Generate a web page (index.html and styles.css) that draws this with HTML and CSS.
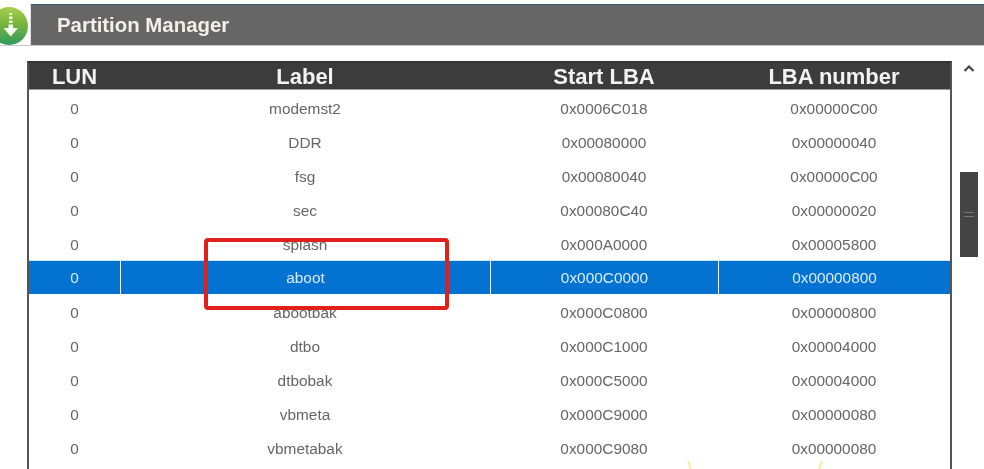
FILE: index.html
```html
<!DOCTYPE html>
<html lang="en">
<head>
    <meta charset="UTF-8">
    <meta name="viewport" content="width=device-width, initial-scale=1.0">
    <title>Partition Manager</title>
    <link rel="stylesheet" href="styles.css">
</head>
<body>
    <div class="title-bar">
        <div class="title-icon">
            <svg width="30" height="41" viewBox="0 -1 30 41">
                <defs>
                    <linearGradient id="ball" x1="0" y1="0" x2="0" y2="1">
                        <stop offset="0" stop-color="#a8d04c"/>
                        <stop offset="0.5" stop-color="#72b23c"/>
                        <stop offset="1" stop-color="#2e9a60"/>
                    </linearGradient>
                </defs>
                <circle cx="9" cy="21" r="19" fill="url(#ball)"/>
                <path d="M9.500 8h2.500v2h-2.500zM9.200 11.500h3.200v2.500H9.200zM9 15.500h3.600V18H9zM8.500 19.500h4.500V23h5l-7.300 8.500L3.500 23h5z" fill="#f6f9ee"/>
            </svg>
        </div>
        <h1>Partition Manager</h1>
    </div>

    <div class="content">
        <div class="table-frame">
            <table class="partitions">
                <thead>
                    <tr>
                        <th class="col-lun">LUN</th>
                        <th class="col-label">Label</th>
                        <th class="col-start">Start LBA</th>
                        <th>LBA number</th>
                    </tr>
                </thead>
                <tbody>
                    <tr><td>0</td><td>modemst2</td><td>0x0006C018</td><td>0x00000C00</td></tr>
                    <tr><td>0</td><td>DDR</td><td>0x00080000</td><td>0x00000040</td></tr>
                    <tr><td>0</td><td>fsg</td><td>0x00080040</td><td>0x00000C00</td></tr>
                    <tr><td>0</td><td>sec</td><td>0x00080C40</td><td>0x00000020</td></tr>
                    <tr><td>0</td><td>splash</td><td>0x000A0000</td><td>0x00005800</td></tr>
                    <tr class="selected"><td>0</td><td>aboot</td><td>0x000C0000</td><td>0x00000800</td></tr>
                    <tr><td>0</td><td>abootbak</td><td>0x000C0800</td><td>0x00000800</td></tr>
                    <tr><td>0</td><td>dtbo</td><td>0x000C1000</td><td>0x00004000</td></tr>
                    <tr><td>0</td><td>dtbobak</td><td>0x000C5000</td><td>0x00004000</td></tr>
                    <tr><td>0</td><td>vbmeta</td><td>0x000C9000</td><td>0x00000080</td></tr>
                    <tr><td>0</td><td>vbmetabak</td><td>0x000C9080</td><td>0x00000080</td></tr>
                </tbody>
            </table>
        </div>

        <div class="scrollbar">
            <svg class="scroll-up" width="12" height="8" viewBox="0 0 12 8">
                <path d="M1.500 7 6 2.500 10.500 7" fill="none" stroke="#444" stroke-width="2.200"/>
            </svg>
            <div class="scroll-thumb"><span></span><span></span></div>
        </div>
    </div>

    <!-- annotation drawn over the screenshot -->
    <div class="red-box"></div>
    <svg class="sparks" width="150" height="8" viewBox="0 0 150 8">
        <path d="M2 0 5 8M133 8 136 0" stroke="#fbe89a" stroke-width="2" fill="none"/>
    </svg>
</body>
</html>
```

FILE: styles.css
```css
html, body {
    height: 100%;
}

body {
    margin: 0;
    padding-top: 4px;
    box-sizing: border-box;
    display: flex;
    flex-direction: column;
    overflow: hidden;
    background-color: #fff;
    font-family: "Liberation Sans", Arial, sans-serif;
    position: relative;
}

.title-bar {
    display: flex;
    align-items: center;
    flex: none;
    height: 42px;
    box-sizing: border-box;
    border-top: 1px solid #3b5a78;
    border-bottom: 1px solid #c8c8c8;
    background-color: #666;
    filter: blur(0.4px);
}

.title-icon {
    width: 30px;
    height: calc(100% + 1px);
    margin-top: -1px;
    flex: none;
    overflow: hidden;
    background-color: #fff;
    border-right: 1px solid #ddd;
}

.title-icon svg {
    display: block;
}

.title-bar h1 {
    margin: 0 0 0 26px;
    font-size: 20.400px;
    font-weight: bold;
    color: #f2f0e8;
}

.content {
    display: flex;
    flex: 1;
    min-height: 0;
    padding: 15px 0 0 27px;
    filter: blur(0.4px);
}

.table-frame {
    width: 925px;
    flex: none;
    box-sizing: border-box;
    border-top: 2px solid #333;
    border-left: 2px solid #555;
    border-right: 2px solid #555;
}

.partitions {
    width: 100%;
    table-layout: fixed;
    border-collapse: separate;
    border-spacing: 0;
}

.partitions th {
    height: 25px;
    padding: 1px 0 0;
    line-height: 24px;
    background-color: #3c3c3c;
    color: #f2f2f2;
    font-size: 22px;
    font-weight: bold;
    border-bottom: 1px solid #999;
}

.col-lun {
    width: 91px;
}

.col-label {
    width: 370px;
}

.col-start {
    width: 228px;
}

.partitions td {
    height: 30px;
    padding: 4px 0 0;
    text-align: center;
    font-size: 15.400px;
    color: #666;
}

.partitions .selected td {
    height: 33px;
    padding: 0;
    background-color: #0472d0;
    color: #d8ecfb;
    border-top: 1px solid #cfe6f7;
    border-left: 1px solid #e8f3fb;
}

.partitions .selected td:first-child {
    border-left: none;
}

.scrollbar {
    flex: 1;
    display: flex;
    flex-direction: column;
    align-items: flex-start;
    padding-left: 8px;
}

.scroll-up {
    margin: 3px 0 0 3px;
}

.scroll-thumb {
    display: flex;
    flex-direction: column;
    justify-content: center;
    gap: 3px;
    width: 18px;
    height: 85px;
    margin-top: 100px;
    background-color: #444;
}

.scroll-thumb span {
    display: block;
    height: 1px;
    margin: 0 4px;
    background-color: #777;
}

.red-box {
    position: absolute;
    left: 204px;
    top: 238px;
    width: 237px;
    height: 64px;
    border: 4px solid #e0201c;
    border-radius: 4px;
}

.sparks {
    position: absolute;
    left: 686px;
    top: 461px;
}
```
